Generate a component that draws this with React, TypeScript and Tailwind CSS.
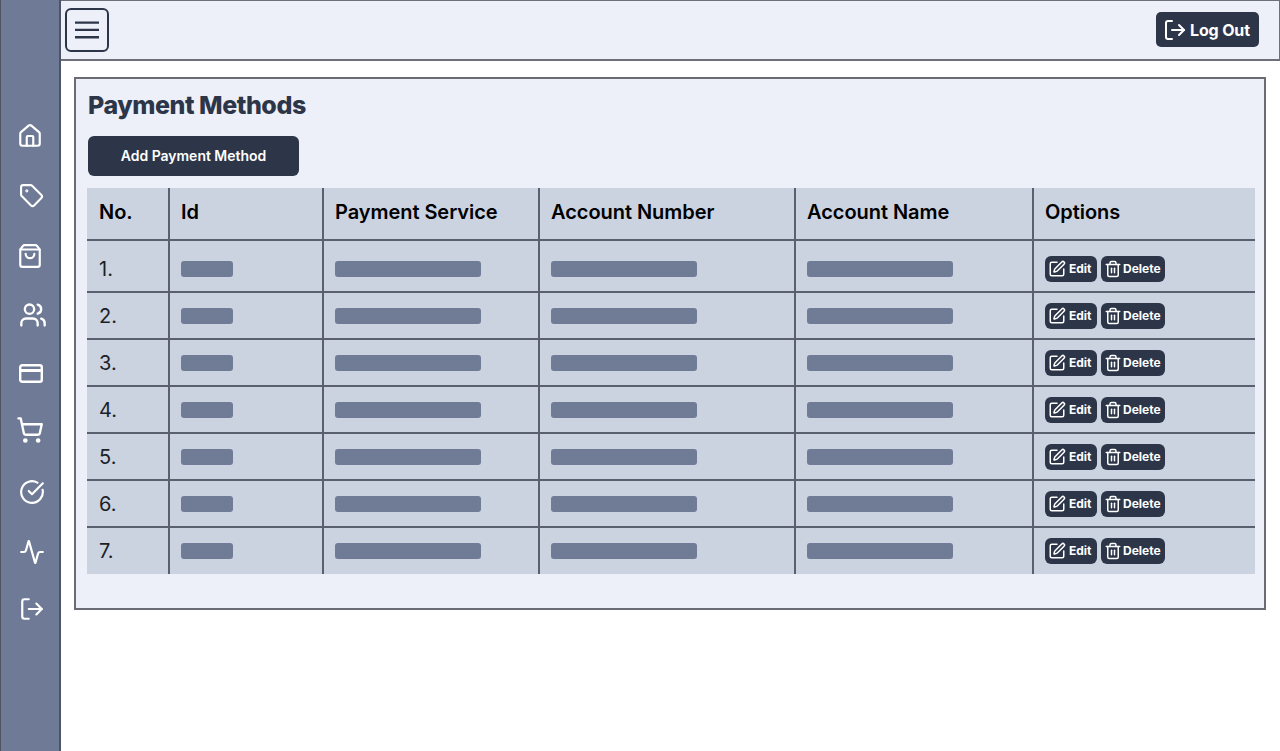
import { House, Tag, ShoppingBag, Users, ShoppingCart, CircleCheckBig, Activity, LogOut, SquarePen, Trash2 } from "lucide-react";

const rows = [1, 2, 3, 4, 5, 6, 7];
const cols = "grid grid-cols-[81px_154px_216px_256px_238px_223px]";
const line = "border-l-2 border-[#5a6070]";

function Bar({ wide }: { wide?: boolean }) {
  return <div className={`h-4 rounded-[3px] bg-[#707b96] ${wide ? "w-[146px]" : "w-[52px]"}`} />;
}

function Nav({ children, cls }: { children: React.ReactNode; cls: string }) {
  return <div className={`flex justify-center text-white ${cls}`}>{children}</div>;
}

export default function App() {
  return (
    <div className="flex h-[751px] bg-white font-['Inter',sans-serif] overflow-hidden">
      <aside className="w-[61px] shrink-0 bg-[#6f7b96] border-l border-r-2 border-l-[#4d5463] border-r-[#4d5463] pt-[123px]">
        <div className="flex flex-col">
          <Nav cls="h-[60px]"><House size={26} strokeWidth={2} /></Nav>
          <Nav cls="h-[60px]"><Tag size={25} strokeWidth={2} className="translate-x-[1px]" /></Nav>
          <Nav cls="h-[60px]"><ShoppingBag size={26} strokeWidth={2} /></Nav>
          <Nav cls="h-[57px]"><Users size={28} strokeWidth={2} className="translate-x-[3px] -translate-y-[2px]" /></Nav>
          <Nav cls="h-[58px]">
            <svg width="24" height="19" viewBox="0 0 24 19" fill="none" stroke="currentColor" strokeWidth="2.400" className="mt-[4px] translate-x-[1px]">
              <rect x="1.200" y="1.200" width="21.600" height="16.600" rx="2" />
              <path d="M1 6.500h22" strokeWidth="3" />
            </svg>
          </Nav>
          <Nav cls="h-[60px]"><ShoppingCart size={28} strokeWidth={2} className="-translate-y-[2px]" /></Nav>
          <Nav cls="h-[61px]"><CircleCheckBig size={26} strokeWidth={2} className="translate-x-[2px] translate-y-[1px]" /></Nav>
          <Nav cls="h-[57px]"><Activity size={26} strokeWidth={2} className="translate-x-[2px]" /></Nav>
          <Nav cls="h-[60px]"><LogOut size={26} strokeWidth={2} className="translate-x-[2px]" /></Nav>
        </div>
      </aside>
      <main className="flex-1 min-w-0 flex flex-col">
        <header className="h-[61px] bg-[#edf0f8] border-t border-r border-b-2 border-[#6e7079] flex items-center justify-between pl-1 pr-[20px]">
          <button className="w-11 h-11 rounded-md border-2 border-[#2d3649] text-[#2d3649] flex items-center justify-center">
            <svg width="24" height="18" viewBox="0 0 24 18" fill="none" stroke="currentColor" strokeWidth="2.400">
              <path d="M0 1.600h24M0 8.900h24M0 16.300h24" />
            </svg>
          </button>
          <button className="w-[103px] h-[35px] rounded-[5px] bg-[#2d3649] text-white flex items-center pl-[7px] gap-[3px] font-bold text-base tracking-[-0.15px] -translate-y-px">
            <LogOut size={24} strokeWidth={2} className="translate-y-px" />
            <span className="translate-y-px">Log Out</span>
          </button>
        </header>
        <section className="mt-4 ml-[13px] w-[1192px] h-[533px] bg-[#edf0f8] border-2 border-[#6a6c73] pt-[11px] pl-[12px]">
          <h1 className="text-[25px] leading-[30px] font-extrabold tracking-[-0.45px] text-[#2d3649]">Payment Methods</h1>
          <button className="mt-[16px] w-[211px] h-10 rounded-md bg-[#2d3649] text-white text-sm font-semibold tracking-[-0.02px]">Add Payment Method</button>
          <div className="mt-3 -ml-px w-[1168px] bg-[#cbd2e0] text-black">
            <div className={`${cols} h-[53px] pb-0 border-b-2 border-[#5a6070] text-[20px] font-semibold tracking-[-0.05px]`}>
              {["No.", "Id", "Payment Service", "Account Number", "Account Name", "Options"].map((h, i) => (
                <div key={h} className={`flex items-center pb-[3px] ${i ? `pl-[11px] ${line}` : "pl-3"}`}>{h}</div>
              ))}
            </div>
            {rows.map((n, r) => (
              <div key={n} className={`${cols} ${r === 0 ? "h-[52px]" : r === 6 ? "h-[46px]" : "h-[47px]"} ${r < 6 ? "border-b-2 border-[#5a6070]" : ""}`}>
                <div className={`flex items-center pl-3 text-[20px] text-[#1b1f27] ${r === 0 ? "pt-[6px]" : ""}`}>{n}.</div>
                <div className={`flex items-center pl-[11px] ${line} ${r === 0 ? "pt-[6px]" : ""}`}><Bar /></div>
                <div className={`flex items-center pl-[11px] ${line} ${r === 0 ? "pt-[6px]" : ""}`}><Bar wide /></div>
                <div className={`flex items-center pl-[11px] ${line} ${r === 0 ? "pt-[6px]" : ""}`}><Bar wide /></div>
                <div className={`flex items-center pl-[11px] ${line} ${r === 0 ? "pt-[6px]" : ""}`}><Bar wide /></div>
                <div className={`flex items-center gap-1 pl-[11px] ${line} ${r === 0 ? "pt-[6px]" : ""}`}>
                  <button className="flex items-center gap-[3px] w-[52px] h-[26px] pl-[3px] rounded-md bg-[#2d3649] text-white text-xs font-bold">
                    <SquarePen size={18} />Edit
                  </button>
                  <button className="flex items-center gap-[1px] w-[64px] h-[26px] pl-[3px] rounded-md bg-[#2d3649] text-white text-xs font-bold">
                    <Trash2 size={18} />Delete
                  </button>
                </div>
              </div>
            ))}
          </div>
        </section>
      </main>
    </div>
  );
}
